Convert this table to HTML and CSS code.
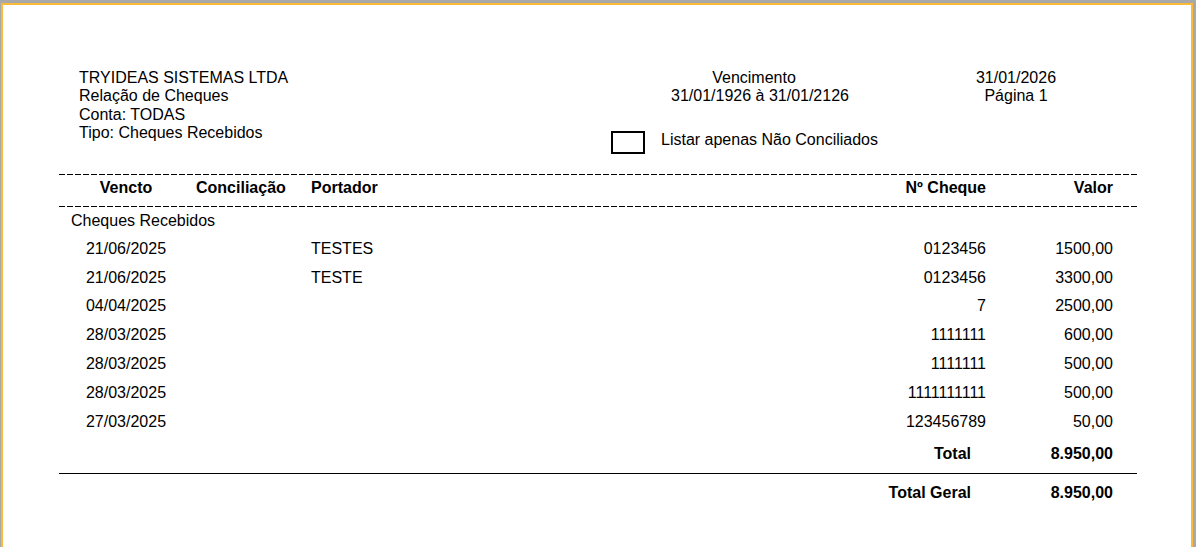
FILE: index.html
```html
<!DOCTYPE html>
<html lang="pt-BR">
<head>
<meta charset="utf-8">
<title>Relação de Cheques</title>
<link rel="stylesheet" href="styles.css">
</head>
<body>
<div class="page">
  <div class="report">
    <header class="report-header">
      <div class="hdr-left">
        <div>TRYIDEAS SISTEMAS LTDA</div>
        <div>Relação de Cheques</div>
        <div>Conta: TODAS</div>
        <div>Tipo: Cheques Recebidos</div>
      </div>
      <div class="hdr-center">
        <div class="venc-title">Vencimento</div>
        <div class="venc-range">31/01/1926 à 31/01/2126</div>
        <div class="filter">
          <span class="checkbox"></span>
          <span class="filter-label">Listar apenas Não Conciliados</span>
        </div>
      </div>
      <div class="hdr-right">
        <div>31/01/2026</div>
        <div>Página 1</div>
      </div>
    </header>

    <div class="dash"></div>
    <div class="row head">
      <div class="c-venc">Vencto</div>
      <div class="c-conc">Conciliação</div>
      <div class="c-port">Portador</div>
      <div class="c-num">Nº Cheque</div>
      <div class="c-val">Valor</div>
    </div>
    <div class="dash"></div>

    <div class="group">Cheques Recebidos</div>

    <div class="row data">
      <div class="c-venc">21/06/2025</div><div class="c-conc"></div><div class="c-port">TESTES</div><div class="c-num">0123456</div><div class="c-val">1500,00</div>
    </div>
    <div class="row data">
      <div class="c-venc">21/06/2025</div><div class="c-conc"></div><div class="c-port">TESTE</div><div class="c-num">0123456</div><div class="c-val">3300,00</div>
    </div>
    <div class="row data">
      <div class="c-venc">04/04/2025</div><div class="c-conc"></div><div class="c-port"></div><div class="c-num">7</div><div class="c-val">2500,00</div>
    </div>
    <div class="row data">
      <div class="c-venc">28/03/2025</div><div class="c-conc"></div><div class="c-port"></div><div class="c-num">1111111</div><div class="c-val">600,00</div>
    </div>
    <div class="row data">
      <div class="c-venc">28/03/2025</div><div class="c-conc"></div><div class="c-port"></div><div class="c-num">1111111</div><div class="c-val">500,00</div>
    </div>
    <div class="row data">
      <div class="c-venc">28/03/2025</div><div class="c-conc"></div><div class="c-port"></div><div class="c-num">1111111111</div><div class="c-val">500,00</div>
    </div>
    <div class="row data">
      <div class="c-venc">27/03/2025</div><div class="c-conc"></div><div class="c-port"></div><div class="c-num">123456789</div><div class="c-val">50,00</div>
    </div>

    <div class="total total-group">
      <div class="t-label">Total</div>
      <div class="t-val">8.950,00</div>
    </div>
    <div class="solid"></div>
    <div class="total total-general">
      <div class="t-label">Total Geral</div>
      <div class="t-val">8.950,00</div>
    </div>
  </div>
</div>
</body>
</html>
```

FILE: styles.css
```css
* { box-sizing: border-box; }

html, body {
  margin: 0;
  height: 100%;
}

body {
  background: #a8a8a8;
  padding: 3px 3px 0 1px;
  font-family: "Liberation Sans", Arial, sans-serif;
  font-size: 16px;
  color: #000;
  overflow: hidden;
}

.page {
  background: #fff;
  border: 2px solid #f9bb37;
  border-bottom: none;
  height: 100%;
}

.report {
  padding: 64px 54px 0 56px;
  line-height: 18.4px;
}

/* header */
.report-header {
  display: flex;
  margin-bottom: 20px;
}

.hdr-left {
  width: 538px;
  padding-left: 20px;
}

.hdr-center {
  width: 320px;
  text-align: center;
}

.venc-title { padding-right: 6px; }
.venc-range { padding-left: 6px; }

.filter {
  display: flex;
  align-items: flex-start;
  gap: 16px;
  margin-top: 25px;
  padding-left: 14px;
  text-align: left;
}

.checkbox {
  display: block;
  width: 34px;
  height: 23px;
  border: 2px solid #000;
}

.filter-label { display: block; }

.hdr-right {
  width: 198px;
  text-align: center;
}

/* lines */
.dash {
  height: 1px;
  background: repeating-linear-gradient(to right, #000 0 6px, transparent 6px 8px);
}

.solid {
  height: 1px;
  background: #000;
  margin-top: 4px;
}

/* table */
.row {
  display: grid;
  grid-template-columns: 134px 118px 1fr 150px 151px;
}

.row.head {
  font-weight: bold;
  padding: 4px 0 9px;
}

.row.data {
  line-height: 28.9px;
}

.c-venc { text-align: center; }
.c-conc { padding-left: 3px; }
.c-num { text-align: right; }
.c-val { text-align: right; padding-right: 24px; }

.group {
  padding: 5px 0 4px 12px;
}

.total {
  display: grid;
  grid-template-columns: 1fr 151px;
  font-weight: bold;
  line-height: 28.8px;
}

.total-group { margin-top: 3px; }
.total-general { margin-top: 5px; }

.t-label { text-align: right; padding-right: 15px; }
.t-val { text-align: right; padding-right: 24px; }
```
